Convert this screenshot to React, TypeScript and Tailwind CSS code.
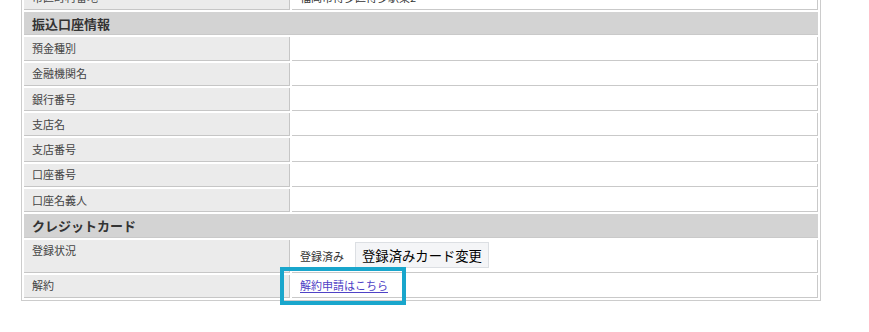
import React from "react";

const font = { fontFamily: '"Noto Sans CJK JP", "Noto Sans", sans-serif' };

function Header({ title }: { title: string }) {
  return (
    <div className="col-span-2 h-[23.3px] flex items-center pl-[8px] bg-[#d3d3d3] border-b border-[#c9c9c9] text-[13px] font-bold text-[#333] leading-none">
      {title}
    </div>
  );
}

function Row({ label, value }: { label: string; value?: React.ReactNode }) {
  return (
    <>
      <div className="h-[23.3px] flex items-center pl-[8px] bg-[#ebebeb] border-r border-b border-[#c6c6c6] text-[11px] text-[#444] leading-none">
        {label}
      </div>
      <div className="h-[23.3px] flex items-center pl-[8px] bg-white border-r border-b border-[#c9c9c9] text-[11px] text-[#333] leading-none">
        {value}
      </div>
    </>
  );
}

export default function App() {
  return (
    <div className="relative w-[869px] h-[332px] overflow-hidden bg-white" style={font}>
      <div className="ml-[21px] -mt-[16.3px] w-[800px] grid grid-cols-[266px_526px] gap-[2px] p-[2px] border border-[#cccccc]">
        <Row label="市区町村番地" value="福岡市博多区博多駅東2" />
        <Header title="振込口座情報" />
        <Row label="預金種別" />
        <Row label="金融機関名" />
        <Row label="銀行番号" />
        <Row label="支店名" />
        <Row label="支店番号" />
        <Row label="口座番号" />
        <Row label="口座名義人" />
        <Header title="クレジットカード" />
        <div className="h-[33px] flex items-start pt-[3px] pl-[8px] bg-[#ebebeb] border-r border-b border-[#c6c6c6] text-[11px] text-[#444] leading-[14px]">
          登録状況
        </div>
        <div className="h-[33px] flex items-center pl-[8px] bg-white border-r border-b border-[#c9c9c9] text-[11px] text-[#333] leading-none">
          <span className="mt-[2px]">登録済み</span>
          <button className="ml-[11px] mt-[-1px] h-[26px] px-[6px] bg-[#f4f5f7] border border-[#dcdfe3] text-[13.33px] text-black leading-none">
            登録済みカード変更
          </button>
        </div>
        <div className="h-[23.3px] flex items-center pl-[8px] bg-[#ebebeb] border-r border-b border-[#c6c6c6] text-[11px] text-[#444] leading-none">
          解約
        </div>
        <div className="relative h-[23.3px] flex items-center pl-[8px] bg-white border-r border-b border-[#c9c9c9] text-[11px] leading-none">
          <a href="#" className="text-[#4f42c6] underline underline-offset-2">
            解約申請はこちら
          </a>
          <div className="absolute -left-[12px] -top-[8px] w-[126px] h-[38px] border-4 border-[#19a6cc] pointer-events-none" />
        </div>
      </div>
    </div>
  );
}
